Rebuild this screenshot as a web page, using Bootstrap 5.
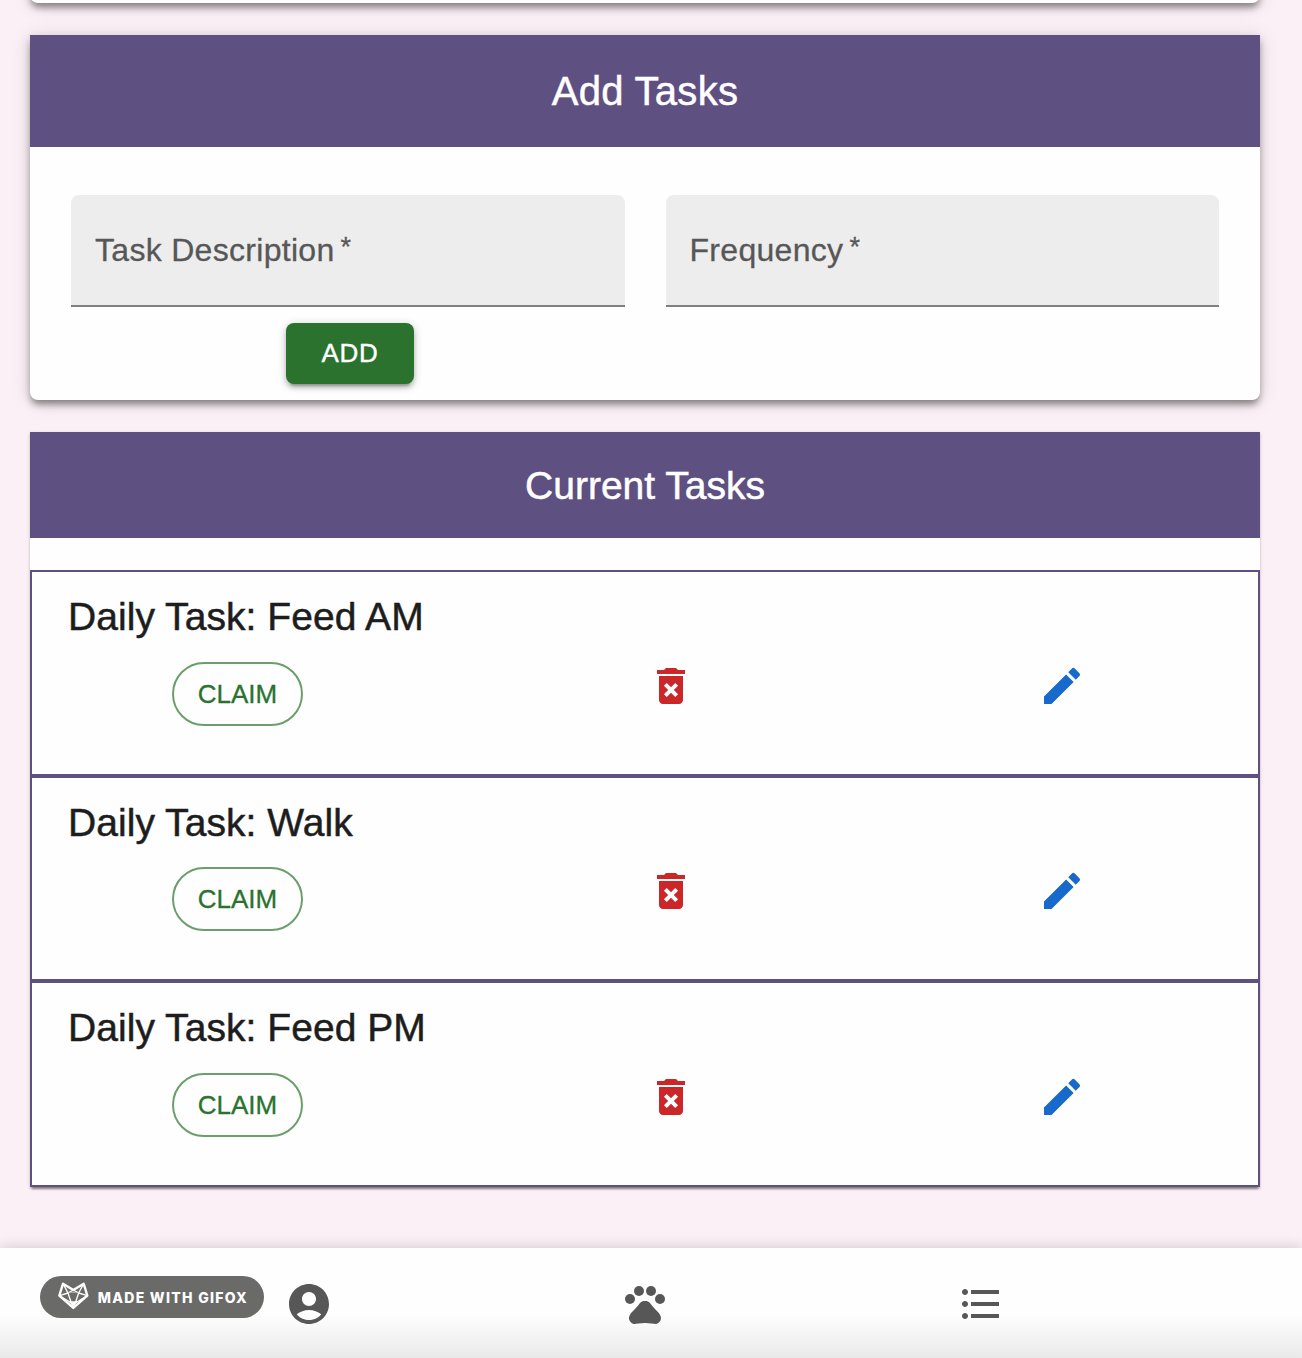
<!DOCTYPE html>
<html lang="en">
<head>
<meta charset="utf-8">
<meta name="viewport" content="width=device-width, initial-scale=1">
<title>Tasks</title>
<link href="https://cdn.jsdelivr.net/npm/bootstrap@5.3.0/dist/css/bootstrap.min.css" rel="stylesheet">
<style>
  body { background: #fbf0f5; font-family: "Liberation Sans", Arial, sans-serif; color: #1d1d1d; height: 1358px; overflow: hidden; }
  .page-col { width: 1230px; margin-left: 30px; }
  .panel { background: #fefefe; border-radius: 0 0 8px 8px; }
  .panel + .panel { margin-top: 32px; }
  .panel-raised { box-shadow: 0 6px 6px -2px rgba(0,0,0,.3), 0 4px 10px rgba(0,0,0,.2), 0 2px 20px rgba(0,0,0,.12); }
  .panel-low { box-shadow: 0 4px 2px -2px rgba(0,0,0,.35), 0 2px 2px rgba(0,0,0,.14), 0 1px 4px rgba(0,0,0,.12); }
  .panel-prev { height: 63px; margin-top: -60px; }
  .panel-head { background: #5f5082; color: #fff; line-height: 1; -webkit-text-stroke: .5px #fff; }
  .head-add { height: 112px; font-size: 40px; letter-spacing: .3px; }
  .head-current { height: 106px; font-size: 39px; }
  .form-area { height: 253px; padding: 48px 41px 0; }
  .field-row { gap: 41px; }
  .field-box { height: 112px; background: #ededed; border-bottom: 2px solid #808080; border-radius: 8px 8px 0 0; padding-left: 24px; font-size: 32px; color: #575757; letter-spacing: .3px; -webkit-text-stroke: .3px #575757; }
  .field-star { font-size: 27px; line-height: 1; margin: -5px 0 0 6px; }
  .btn-add { width: 128px; height: 61px; margin: 16px 0 0 215px; padding: 0; background: #2a722d; color: #fff; border: 0; border-radius: 8px; font-size: 26px; letter-spacing: .75px; -webkit-text-stroke: .4px #fff; box-shadow: 0 6px 2px -4px rgba(0,0,0,.2), 0 4px 4px rgba(0,0,0,.14), 0 2px 10px rgba(0,0,0,.22); }
  .btn-add:hover { background: #1b5e20; color: #fff; }
  .task-row { height: 206px; border: 2px solid #5f5082; padding: 22px 0 0 36px; }
  .task-title { font-size: 39px; line-height: 46px; letter-spacing: .05px; margin: 0; -webkit-text-stroke: .5px #1d1d1d; }
  .task-actions { height: 64px; margin-top: 22px; padding-left: 104px; }
  .task-row:nth-child(2) { height: 205px; }
  .task-row:nth-child(2) .task-actions { margin-top: 21px; }
  .btn-claim { width: 131px; height: 64px; border: 2px solid #6a9f6c; border-radius: 32px; color: #2a722d; font-size: 26px; padding: 0; -webkit-text-stroke: .3px #2a722d; }
  .btn-claim:hover { background: #eef5ee; color: #2a722d; }
  .glyph { width: 48px; height: 48px; flex: none; display: block; }
  .glyph-trash { margin-left: 344px; fill: #cb2728; }
  .glyph-edit { margin-left: 343px; fill: #1769cb; }
  .bottom-bar { height: 110px; padding: 32px 153px 0 141px; background: linear-gradient(#fefefe 0, #fefefe 60%, #e9e9e9 100%); box-shadow: 0 -2px 12px rgba(0,0,0,.14); }
  .bottom-bar .nav-link { flex: 1 1 0; padding: 0; color: #575757; }
  .bottom-bar .glyph { margin: 0 auto; fill: #575757; }
  .gif-badge { left: 40px; top: 28px; width: 224px; height: 42px; border-radius: 21px; background: #6a6a69; color: #fff; padding-left: 17px; font-family: Inter, "Open Sans", sans-serif; font-weight: 800; font-size: 14px; letter-spacing: 1.3px; white-space: nowrap; }
  .gif-badge svg { width: 32.67px; height: 29.33px; flex: none; margin: -2px 8px 0 0; }
</style>
<script src="https://cdn.jsdelivr.net/npm/bootstrap@5.3.0/dist/js/bootstrap.bundle.min.js"></script>
</head>
<body>
<svg class="d-none" xmlns="http://www.w3.org/2000/svg">
  <symbol id="trash" viewBox="0 0 24 24"><path d="M6 19c0 1.1.9 2 2 2h8c1.1 0 2-.9 2-2V7H6v12zm2.46-7.12l1.41-1.41L12 12.59l2.12-2.12 1.41 1.41L13.41 14l2.12 2.12-1.41 1.41L12 15.41l-2.12 2.12-1.41-1.41L10.59 14l-2.13-2.12zM15.5 4l-1-1h-5l-1 1H5v2h14V4z"/></symbol>
  <symbol id="edit" viewBox="0 0 24 24"><path d="M3 17.25V21h3.75L17.81 9.94l-3.75-3.75L3 17.25zM20.71 7.04c.39-.39.39-1.02 0-1.41l-2.34-2.34a.9959.9959 0 0 0-1.41 0l-1.83 1.83 3.75 3.75 1.83-1.83z"/></symbol>
</svg>

<main class="page-col d-flex flex-column">
  <section class="panel panel-raised panel-prev"></section>

  <section class="panel panel-raised">
    <div class="panel-head head-add d-flex align-items-center justify-content-center">Add Tasks</div>
    <div class="form-area">
      <div class="field-row d-flex">
        <div class="field-box d-flex align-items-center flex-fill w-50">Task Description<span class="field-star">*</span></div>
        <div class="field-box d-flex align-items-center flex-fill w-50">Frequency<span class="field-star">*</span></div>
      </div>
      <button type="button" class="btn btn-add d-block">ADD</button>
    </div>
  </section>

  <section class="panel panel-low rounded-0">
    <div class="panel-head head-current d-flex align-items-center justify-content-center">Current Tasks</div>
    <div style="padding-top:32px">
      <div class="task-row">
        <h2 class="task-title fw-normal">Daily Task: Feed AM</h2>
        <div class="task-actions d-flex">
          <button type="button" class="btn btn-claim">CLAIM</button>
          <svg class="glyph glyph-trash"><use href="#trash"/></svg>
          <svg class="glyph glyph-edit"><use href="#edit"/></svg>
        </div>
      </div>
      <div class="task-row">
        <h2 class="task-title fw-normal">Daily Task: Walk</h2>
        <div class="task-actions d-flex">
          <button type="button" class="btn btn-claim">CLAIM</button>
          <svg class="glyph glyph-trash"><use href="#trash"/></svg>
          <svg class="glyph glyph-edit"><use href="#edit"/></svg>
        </div>
      </div>
      <div class="task-row">
        <h2 class="task-title fw-normal">Daily Task: Feed PM</h2>
        <div class="task-actions d-flex">
          <button type="button" class="btn btn-claim">CLAIM</button>
          <svg class="glyph glyph-trash"><use href="#trash"/></svg>
          <svg class="glyph glyph-edit"><use href="#edit"/></svg>
        </div>
      </div>
    </div>
  </section>
</main>

<nav class="bottom-bar fixed-bottom d-flex align-items-start">
  <a class="nav-link" href="#" aria-label="Account"><svg class="glyph" viewBox="0 0 24 24"><path d="M12 2C6.48 2 2 6.48 2 12s4.48 10 10 10 10-4.48 10-10S17.52 2 12 2zm0 4c1.93 0 3.5 1.57 3.5 3.5S13.93 13 12 13s-3.5-1.57-3.5-3.5S10.07 6 12 6zm0 14c-2.03 0-4.43-.82-6.14-2.88C7.55 15.8 9.68 15 12 15s4.45.8 6.14 2.12C16.43 19.18 14.03 20 12 20z"/></svg></a>
  <a class="nav-link" href="#" aria-label="Pets"><svg class="glyph" viewBox="0 0 24 24"><circle cx="4.5" cy="9.5" r="2.5"/><circle cx="9" cy="5.5" r="2.5"/><circle cx="15" cy="5.5" r="2.5"/><circle cx="19.5" cy="9.5" r="2.5"/><path d="M17.34 14.86c-.87-1.02-1.6-1.89-2.48-2.91-.46-.54-1.05-1.08-1.75-1.32-.11-.04-.22-.07-.33-.09-.25-.04-.52-.04-.78-.04s-.53 0-.79.05c-.11.02-.22.05-.33.09-.7.24-1.28.78-1.75 1.32-.87 1.02-1.6 1.89-2.48 2.91-1.31 1.31-2.92 2.76-2.62 4.79.29 1.02 1.02 2.03 2.33 2.32.73.15 3.06-.44 5.54-.44h.18c2.48 0 4.81.58 5.54.44 1.31-.29 2.04-1.31 2.33-2.32.31-2.04-1.3-3.49-2.61-4.8z"/></svg></a>
  <a class="nav-link" href="#" aria-label="List"><svg class="glyph" viewBox="0 0 24 24"><path d="M4 10.5c-.83 0-1.5.67-1.5 1.5s.67 1.5 1.5 1.5 1.5-.67 1.5-1.5-.67-1.5-1.5-1.5zm0-6c-.83 0-1.5.67-1.5 1.5S3.17 7.5 4 7.5 5.5 6.83 5.5 6 4.83 4.5 4 4.5zm0 12c-.83 0-1.5.68-1.5 1.5s.68 1.5 1.5 1.5 1.5-.68 1.5-1.5-.67-1.5-1.5-1.5zM7 19h14v-2H7v2zm0-6h14v-2H7v2zm0-8v2h14V5H7z"/></svg></a>
  <div class="gif-badge position-absolute d-flex align-items-center">
    <svg viewBox="170 366 98 88" fill="none" stroke="#fff" stroke-linejoin="round">
      <path stroke-width="7" d="M188 374L219 393L250 374L261 410L219 447L177 410Z"/>
      <path stroke-width="4" d="M188 374L203 402L177 410L213 432L203 402L219 393L235 402L250 374M235 402L261 410L225 432L235 402"/>
      <path stroke-width="2.5" stroke="#c9c9c9" d="M203 400H235"/>
      <path fill="#fff" stroke="none" d="M207 427H231L219 447Z"/>
    </svg>
    <span>MADE WITH GIFOX</span>
  </div>
</nav>
</body>
</html>
